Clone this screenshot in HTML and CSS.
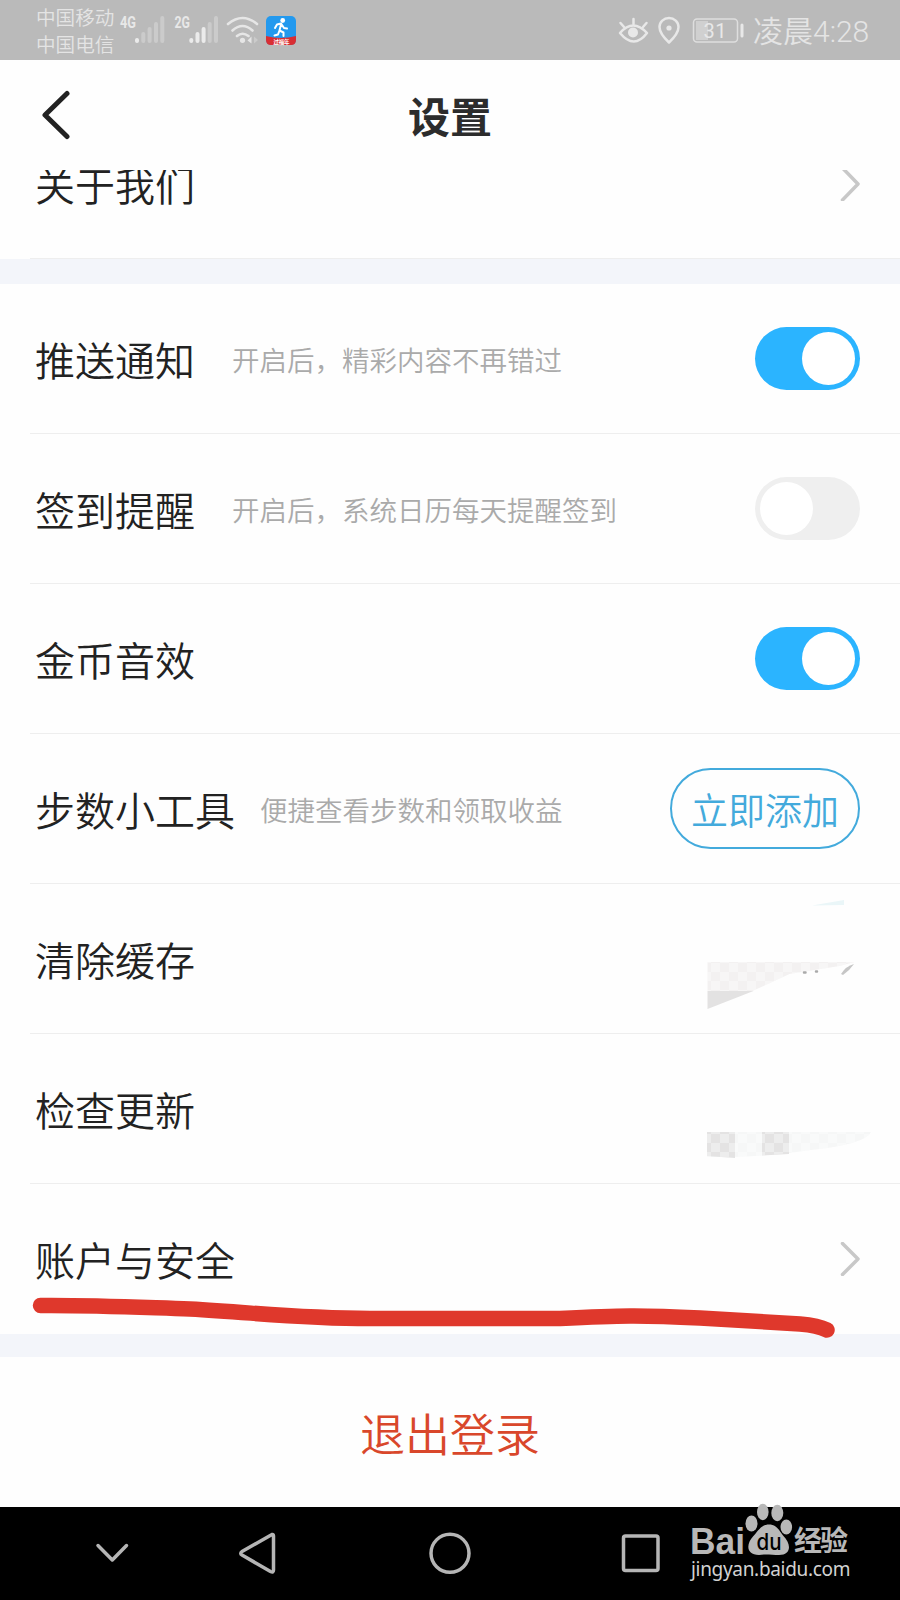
FILE: index.html
```html
<!DOCTYPE html>
<html lang="zh-CN">
    <head>
        <meta charset="UTF-8">
        <title>设置</title>
        <link rel="stylesheet" href="styles.css">
    </head>
    <body>
        <div class="status-bar">
            <div class="carriers">
                <span>中国移动</span>
                <span>中国电信</span>
            </div>
            <svg class="signals" width="184" height="60" viewBox="116 0 184 60">
                <g class="net-type">
                    <text x="120" y="28" textLength="16" lengthAdjust="spacingAndGlyphs">4G</text>
                    <text x="174.500" y="28" textLength="15.500" lengthAdjust="spacingAndGlyphs">2G</text>
                </g>
                <g class="bars">
                    <path class="lit" d="M137 40v1"/>
                    <path d="M143.300 34v7M149.600 29v12M156 24v17M162.300 18v23"/>
                    <path class="lit" d="M191.300 40v1M197.500 34v7M203.600 29v12"/>
                    <path d="M209.700 24v17M216 18v23"/>
                </g>
                <g class="wifi">
                    <path d="M228 24Q242.500 12 257 24M232.500 30.500Q242.500 21.500 252.500 30.500M237 36Q242.500 31.500 248.500 36"/>
                    <circle cx="242.500" cy="40.300" r="2.600"/>
                    <path class="arrow" d="M247.500 40.500l4-4v7z"/>
                    <path class="arrow dim" d="M258 40l-4-3.500v7z"/>
                </g>
                <g class="app">
                    <rect x="266" y="16" width="30" height="29" rx="5" fill="#2399ee"/>
                    <path d="M266 36q15 4 30 0v4q0 5-5 5h-20q-5 0-5-5z" fill="#d92e33"/>
                    <circle cx="282.700" cy="20.500" r="2.400" fill="#fff"/>
                    <path class="runner" d="M275 28l2-3.500 4-1 3 4.500 3 .500M281 24.500l-1.500 6 4 2v3.500M279.500 30.500l-1.500 4-3.500 1"/>
                    <text x="273.500" y="43.500" textLength="16">过福年</text>
                </g>
            </svg>
            <svg class="indicators" width="132" height="60" viewBox="616 0 132 60">
                <path d="M620 33q13-15 27 0q-13 17-27 0zM633.500 24v-5M624 27l-3.500-4M643 27l3.500-4"/>
                <circle class="solid" cx="633" cy="32.500" r="5"/>
                <path d="M669 42.500q-9.500-9-9.500-15.500a9.500 9 0 0 1 19 0q0 6.500-9.500 15.500z"/>
                <circle class="solid" cx="669" cy="28" r="2.600"/>
                <rect class="charge" x="696" y="21" width="12" height="19"/>
                <rect class="cell" x="693.500" y="19" width="44" height="23" rx="3.500"/>
                <path class="cap" d="M742 25v11"/>
                <text x="703.500" y="38" textLength="23">31</text>
            </svg>
            <span class="clock">凌晨4:28</span>
        </div>

        <div class="header">
            <svg class="back" width="30" height="50" viewBox="0 0 30 50"><path d="M26 3.500L4 25L26 46.500"/></svg>
            <h1>设置</h1>
        </div>

        <div class="settings">
            <div class="row row-about">
                <span class="label">关于我们</span>
                <svg class="chevron" width="20" height="34" viewBox="0 0 20 34"><path d="M2.500 1L18 17L2.500 33"/></svg>
            </div>
            <div class="band"></div>
            <div class="row">
                <span class="label">推送通知</span>
                <span class="hint">开启后，精彩内容不再错过</span>
                <span class="switch on"></span>
            </div>
            <div class="row">
                <span class="label">签到提醒</span>
                <span class="hint">开启后，系统日历每天提醒签到</span>
                <span class="switch"></span>
            </div>
            <div class="row">
                <span class="label">金币音效</span>
                <span class="switch on"></span>
            </div>
            <div class="row">
                <span class="label">步数小工具</span>
                <span class="hint">便捷查看步数和领取收益</span>
                <button class="add">立即添加</button>
            </div>
            <div class="row">
                <span class="label">清除缓存</span>
                <svg class="mosaic" width="180" height="148" viewBox="700 885 180 148">
                    <defs>
                        <pattern id="checks" width="18" height="18" patternUnits="userSpaceOnUse">
                            <path d="M0 0h9v9h-9zM9 9h9v9h-9z" fill="#fff" opacity=".35"/>
                        </pattern>
                    </defs>
                    <path d="M812 905.500l32-5.500v5z" fill="#eaf6f8"/>
                    <path d="M707.500 962h147l-15 4-50 8-37 17h-45z" fill="#f3f1f1"/>
                    <path d="M707.500 962h147l-15 4-50 8-37 17h-45z" fill="url(#checks)"/>
                    <path d="M707.500 991h46l-46 18z" fill="#e3e2e2"/>
                    <path d="M804 972.500h1.500M816 971.500h1" stroke="#aaa" stroke-width="2.500"/>
                    <path d="M841 974q5-8 13-10-4 6-11 11z" fill="#c6c6c6"/>
                </svg>
            </div>
            <div class="row">
                <span class="label">检查更新</span>
                <svg class="mosaic" width="180" height="148" viewBox="700 1035 180 148">
                    <path d="M707 1132h164q-5 12-60 18-50 8-104 7z" fill="#f6f7f7"/>
                    <path d="M707 1132h28v26l-28-2zM762 1132h27v22l-27 1.500z" fill="#e4e3e3"/>
                    <path d="M707 1132h164q-5 12-60 18-50 8-104 7z" fill="url(#checks)"/>
                </svg>
            </div>
            <div class="row row-account">
                <span class="label">账户与安全</span>
                <svg class="chevron" width="20" height="34" viewBox="0 0 20 34"><path d="M2.500 1.500L18 17L2.500 32.500"/></svg>
                <svg class="marker" width="840" height="60" viewBox="0 1290 840 60">
                    <path d="M40.500 1305.500C90 1305 130 1307 190 1309C260 1313 300 1318.500 370 1318.500H560C620 1315.500 640 1315 700 1318L800 1324Q818 1325.500 827 1330"/>
                </svg>
            </div>
            <div class="band band-short"></div>
        </div>

        <div class="logout">退出登录</div>

        <div class="nav-bar">
            <svg class="nav-icons" width="680" height="93" viewBox="0 1507 680 93">
                <path d="M98 1545.500L112.300 1560L126.500 1545.500"/>
                <path d="M272 1534.500Q273.500 1534 273.500 1536V1570Q273.500 1573 270.500 1571.500L242 1555Q239.500 1553.500 242 1551.500Z"/>
                <circle cx="450" cy="1553.300" r="19"/>
                <rect x="623.500" y="1536" width="34.500" height="34.500" rx="2"/>
            </svg>
            <svg class="watermark" width="180" height="100" viewBox="680 1500 180 100">
                <g class="paw">
                    <ellipse cx="751.500" cy="1523.500" rx="6" ry="8"/>
                    <ellipse cx="762.800" cy="1512" rx="5.800" ry="8.300"/>
                    <ellipse cx="777.300" cy="1513" rx="6" ry="8.300"/>
                    <ellipse cx="786.300" cy="1527" rx="5.800" ry="7.500"/>
                    <path d="M769 1524.500c8 0 10 6 14 11 9 9 8 19.500-4 19.500-6 0-14-1-20 0-13 0-13-11-6-18.500 5-5 8-12 16-12z"/>
                </g>
                <text class="bai" x="690" y="1553.500" textLength="55" lengthAdjust="spacingAndGlyphs">Bai</text>
                <text class="du" x="756.500" y="1550" textLength="25" lengthAdjust="spacingAndGlyphs">du</text>
                <text class="jingyan" x="794" y="1551" textLength="54">经验</text>
                <text class="site" x="691" y="1576" textLength="159.500">jingyan.baidu.com</text>
            </svg>
        </div>
    </body>
</html>
```

FILE: styles.css
```css
body {
    margin: 0;
    width: 900px;
    height: 1600px;
    overflow: hidden;
    display: flex;
    flex-direction: column;
    background-color: #fefefe;
    color: #222;
    font-family: "Noto Sans CJK SC", sans-serif;
    font-weight: 350;
}

svg {
    flex-shrink: 0;
    fill: none;
    stroke-linecap: round;
    stroke-linejoin: round;
}

.status-bar {
    display: flex;
    align-items: center;
    height: 60px;
    background-color: #bababa;
    color: #e4e4e4;
}

.carriers {
    display: flex;
    flex-direction: column;
    width: 80px;
    padding: 0 0 1px 36px;
    font-size: 19.6px;
    line-height: 27px;
    white-space: nowrap;
}

.net-type {
    fill: #e8e8e8;
    font: bold 16px Roboto, sans-serif;
}

.bars {
    stroke: #cbcbcb;
    stroke-width: 4;
}

.bars .lit {
    stroke: #ebebeb;
}

.wifi {
    stroke: #e6e6e6;
    stroke-width: 2.6;
}

.wifi circle,
.wifi .arrow {
    fill: #e6e6e6;
    stroke-width: 0;
}

.wifi .dim {
    fill: #cbcbcb;
}

.app .runner {
    stroke: #fff;
    stroke-width: 2;
}

.app text {
    fill: #fff;
    font-size: 5.5px;
    font-weight: bold;
}

.indicators {
    margin-left: auto;
    stroke: #e8e8e8;
    stroke-width: 2.5;
}

.indicators .solid {
    fill: #e8e8e8;
    stroke: none;
}

.indicators .charge {
    fill: #d0d0d0;
    stroke: none;
}

.indicators .cell {
    stroke: #dedede;
    stroke-width: 1.5;
}

.indicators .cap {
    stroke-width: 3;
}

.indicators text {
    fill: #e8e8e8;
    stroke: none;
    font: 20px Roboto, sans-serif;
}

.clock {
    width: 147px;
    padding: 3px 0 0 5px;
    font-family: Roboto, "Noto Sans CJK SC", sans-serif;
    font-size: 30px;
    line-height: 57px;
    white-space: nowrap;
}

.header {
    display: grid;
    grid-template-columns: 110px 1fr 110px;
    align-items: center;
    height: 110px;
}

.back {
    margin-left: 41px;
    stroke: #222;
    stroke-width: 5;
}

h1 {
    margin: 0;
    color: #2c2c2c;
    font-size: 42px;
    line-height: 60px;
    text-align: center;
}

.row {
    display: flex;
    align-items: center;
    box-sizing: border-box;
    height: 150px;
    margin-left: 30px;
    padding: 0 40px 0 5px;
    border-bottom: 1px solid #eee;
}

/* list is scrolled, the first row is cut by the header */
.row-about {
    height: 89px;
    align-items: flex-start;
    overflow: hidden;
}

.row-about .label {
    margin-top: -16px;
}

.row-about .chevron {
    margin-top: -3px;
}

.row-account {
    position: relative;
    border-bottom: 0;
}

.label {
    min-width: 172px;
    margin-right: 25px;
    font-size: 40px;
    line-height: 60px;
}

.hint {
    color: #aaa;
    font-size: 27.5px;
}

.switch,
.add,
.chevron,
.mosaic {
    margin-left: auto;
}

.mosaic {
    margin-right: -20px;
}

.switch {
    box-sizing: border-box;
    width: 105px;
    height: 63px;
    padding: 5px;
    border-radius: 32px;
    background-color: #efefef;
}

.switch::after {
    content: "";
    display: block;
    width: 53px;
    height: 53px;
    border-radius: 50%;
    background-color: #fff;
}

.switch.on {
    background-color: #2bb4ff;
}

.switch.on::after {
    margin-left: auto;
}

.add {
    box-sizing: border-box;
    width: 190px;
    height: 81px;
    padding: 0;
    border: 2.5px solid #43aadc;
    border-radius: 41px;
    background-color: transparent;
    color: #43aadc;
    font: inherit;
    font-size: 37px;
}

.chevron {
    stroke: #c8c8c8;
    stroke-width: 3.5;
}

.band {
    height: 25px;
    background-color: #f3f5fa;
}

.band-short {
    height: 23px;
}

.marker {
    position: absolute;
    left: -30px;
    top: 106px;
    stroke: #df382c;
    stroke-width: 15.5;
}

.logout {
    height: 150px;
    color: #d9472b;
    font-size: 45px;
    line-height: 151px;
    text-align: center;
}

.nav-bar {
    display: flex;
    align-items: flex-end;
    height: 93px;
    background-color: #000;
}

.nav-icons {
    stroke: #b5b5b5;
    stroke-width: 3.5;
}

.watermark .paw,
.watermark .bai,
.watermark .jingyan {
    fill: #b8b8b8;
}

.watermark .bai {
    font: bold 36px "Liberation Sans", sans-serif;
}

.watermark .du {
    fill: #000;
    font: 500 23px Inter, sans-serif;
}

.watermark .jingyan {
    font-size: 28px;
    font-weight: bold;
}

.watermark .site {
    fill: #d2d2d2;
    font: 19px "Noto Sans", sans-serif;
}
```
